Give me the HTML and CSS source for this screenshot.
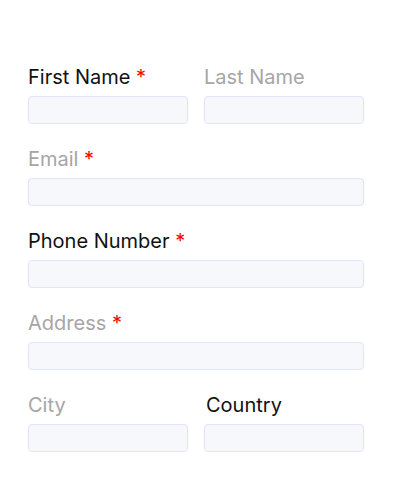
FILE: index.html
```html
<!DOCTYPE html>
<html lang="en">
<head>
  <meta charset="UTF-8">
  <meta name="viewport" content="width=device-width, initial-scale=1.0">
  <title>Contact Form</title>
  <link rel="stylesheet" href="styles.css">
</head>
<body>

<form id="contact-form">
  <div class="row">
    <div class="field">
      <label class="label">First Name <span class="req">*</span></label>
      <input type="text" class="input">
    </div>
    <div class="field">
      <label class="label muted">Last Name</label>
      <input type="text" class="input">
    </div>
  </div>
  <div class="field">
    <label class="label muted">Email <span class="req">*</span></label>
    <input type="text" class="input">
  </div>
  <div class="field">
    <label class="label">Phone Number <span class="req">*</span></label>
    <input type="text" class="input">
  </div>
  <div class="field">
    <label class="label muted">Address <span class="req">*</span></label>
    <input type="text" class="input">
  </div>
  <div class="row">
    <div class="field">
      <label class="label muted">City</label>
      <input type="text" class="input">
    </div>
    <div class="field">
      <label class="label shifted">Country</label>
      <input type="text" class="input">
    </div>
  </div>
</form>

</body>
</html>
```
FILE: styles.css
```css
body {
  margin: 0;
  font-family: 'Inter', sans-serif;
  background-color: #fff;
  color: #111;
}

#contact-form {
  width: 336px;
  padding: 65px 28px 0;
  display: flex;
  flex-direction: column;
  gap: 23px;
}

.row {
  display: flex;
  gap: 16px;
}

.row .field {
  flex: 1;
  min-width: 0;
}

.field {
  display: flex;
  flex-direction: column;
  gap: 7px;
}

.label {
  font-size: 20px;
  line-height: 24px;
  color: #111;
}

.label.muted {
  color: #a6a6a6;
}

.label.shifted {
  padding-left: 2px;
}

.req {
  color: #ff0000;
}

.input {
  width: 100%;
  height: 28px;
  margin: 0;
  padding: 0 8px;
  border: 1px solid #e1e5fa;
  border-radius: 4px;
  background-color: #f7f8fc; /* pale blue-grey fill */
  box-sizing: border-box;
  outline: none;
  font-family: inherit;
}
```
